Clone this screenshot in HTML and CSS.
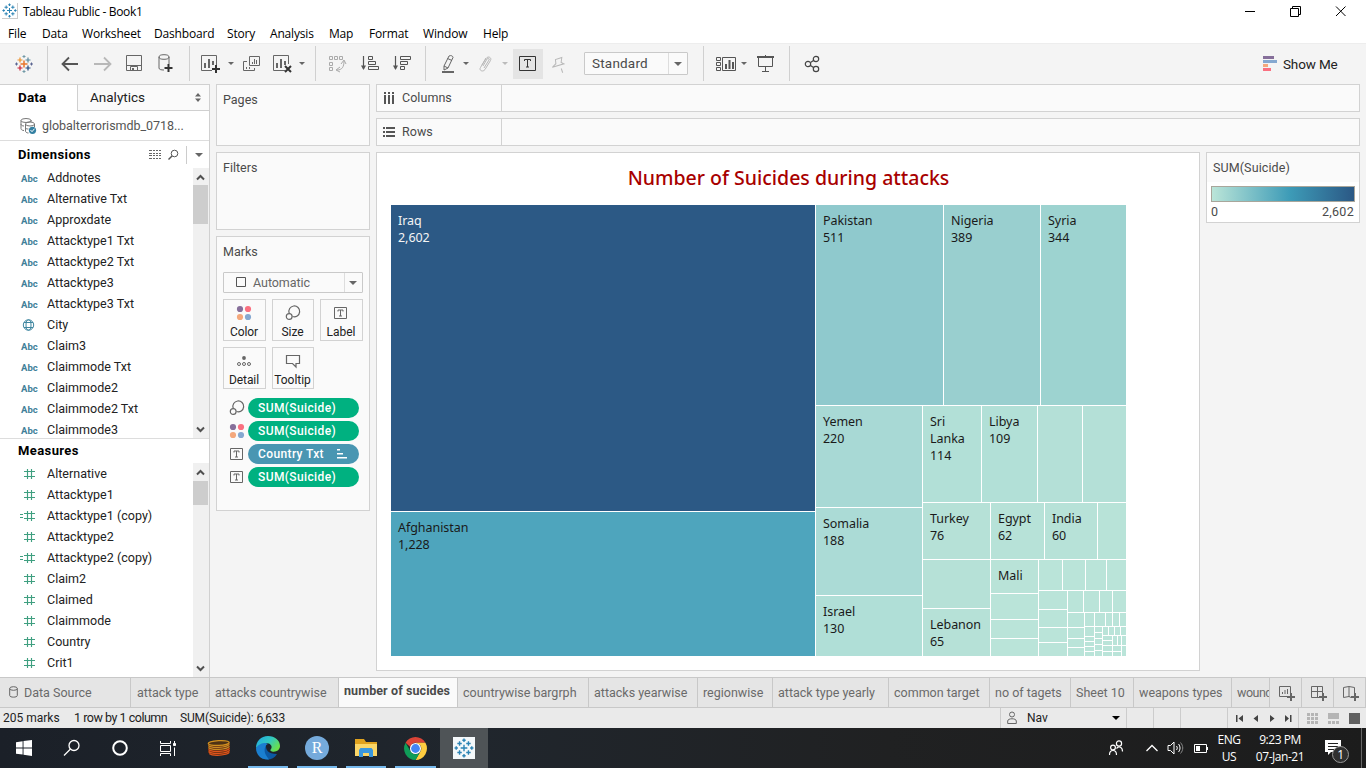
FILE: index.html
```html
<!DOCTYPE html>
<html lang="en">
<head>
<meta charset="utf-8">
<title>Tableau Public - Book1</title>
<link rel="stylesheet" href="styles.css">
</head>
<body>
<svg class="defs" width="0" height="0">
  <symbol id="tlogo" viewBox="0 0 18 18"><path d="M9 5.5v7M5.5 9h7" stroke="#e8762c" stroke-width="1.5"/><path d="M5 2.5v5M2.5 5h5" stroke="#eb912c" stroke-width="1.2"/><path d="M13 2.5v5M10.5 5h5" stroke="#59879b" stroke-width="1.2"/><path d="M5 10.500v5M2.500 13h5" stroke="#c72035" stroke-width="1.2"/><path d="M13 10.500v5M10.500 13h5" stroke="#1f457e" stroke-width="1.2"/><path d="M9 0v3M7.500 1.500h3M9 15v3M7.500 16.500h3" stroke="#7199a6"/><path d="M1.500 7.500v3M0 9h3M16.500 7.500v3M15 9h3" stroke="#5b6591"/></symbol>
  <symbol id="blogo" viewBox="0 0 18 18"><path d="M9 6v6M6 9h6M5 3v4M3 5h4M13 3v4M11 5h4M5 11v4M3 13h4M13 11v4M11 13h4M9 0.500v3M7.500 2h3M9 14.500v3M7.500 16h3M2 7.500v3M0.500 9h3M16 7.500v3M14.500 9h3" stroke="#2b83b4" stroke-width="1.250"/></symbol>
  <symbol id="size" viewBox="0 0 16 16"><g fill="none" stroke="#666" stroke-width="1.200"><path d="M4.200 8.200A5.400 5.400 0 1 1 7.600 11.500"/><circle cx="4.200" cy="11.500" r="2.900"/></g></symbol>
  <symbol id="color" viewBox="0 0 16 16"><circle cx="4" cy="4" r="3.100" fill="#866f9a"/><circle cx="12" cy="4" r="3.100" fill="#fa7080"/><circle cx="4" cy="12" r="3.100" fill="#f4a87c"/><circle cx="12" cy="12" r="3.100" fill="#85a8d0"/></symbol>
  <symbol id="label" viewBox="0 0 16 16"><g fill="none" stroke="#666"><path d="M1.500 2.500h12v11h-12z"/><path d="M5 6.500v-1.500h5v1.500M7.500 5v6M6 11h3"/></g></symbol>
  <symbol id="num" viewBox="0 0 24 12"><path d="M10.500 1v10M14.500 1v10M7 3.500h11M7 8.500h11" stroke="#3f9f80" stroke-width="1.150"/></symbol>
  <symbol id="calc" viewBox="0 0 24 12"><path d="M10.500 1v10M14.500 1v10M7 3.500h11M7 8.500h11M3 4.500h3M3 7.500h3" stroke="#3f9f80" stroke-width="1.150"/></symbol>
  <symbol id="globe" viewBox="0 0 24 12"><g fill="none" stroke="#3f86a0"><circle cx="11.500" cy="6" r="5.200"/><ellipse cx="11.500" cy="6" rx="2.500" ry="5.200"/><path d="M7 3.500h9M7 8.500h9"/></g></symbol>
</svg>

<header class="titlebar">
  <svg class="app-icon" viewBox="0 0 18 18"><use href="#blogo"/></svg>
  <span class="app-title">Tableau Public - Book1</span>
  <svg class="win-buttons" width="110" height="20" fill="none" stroke="#000"><path d="M0 10.500h10M45.500 7.500h8v8h-8zM47.500 7.500v-2h8v8h-2M91 5.500l9.500 9.500M100.500 5.500l-9.500 9.500"/></svg>
</header>
<nav class="menubar"><span>File</span><span>Data</span><span>Worksheet</span><span>Dashboard</span><span>Story</span><span>Analysis</span><span>Map</span><span>Format</span><span>Window</span><span>Help</span></nav>

<div class="toolbar">
  <svg width="18" height="18"><use href="#tlogo"/></svg>
  <i class="sep"></i>
  <svg width="18" height="16" fill="none" stroke="#555" stroke-width="1.800"><path d="M17 8H2M8 1.500L1.500 8 8 14.500"/></svg>
  <svg width="18" height="16" fill="none" stroke="#b8b8b8" stroke-width="1.800"><path d="M0 8h15M10 1.500L16.500 8 10 14.500"/></svg>
  <svg width="17" height="17" fill="none" stroke="#666"><path d="M.500.500h15v15H.500zM.500 10.500h15M4.500 15v-3.500h7V15"/><path d="M6 13h2v3H6z" fill="#666" stroke="none"/></svg>
  <svg width="18" height="19" fill="none" stroke="#666"><ellipse cx="6" cy="3" rx="5" ry="2.300"/><path d="M1 3v11c0 1.500 2 2 5 2M11 3v7"/><path d="M10.500 10v8M6.500 14h8" stroke="#333" stroke-width="2"/></svg>
  <i class="sep"></i>
  <svg width="20" height="19" fill="none" stroke="#666"><path d="M12 16.500H1.500v-15h15V11M17 2"/><path d="M5 9v5M9 5v9M13 7v4" stroke-width="2"/><path d="M16 11v8M12 15h8" stroke="#333" stroke-width="2"/></svg>
  <i class="caret"></i>
  <svg width="18" height="18" fill="none" stroke="#666"><path d="M6.500 1.500h10v9h-10zM4 6.500H.500v9h11V13M9.500 7v2M11.500 4v5M13.500 5v4M3.500 12v2M6.500 12v2"/></svg>
  <svg width="20" height="19" fill="none" stroke="#666"><path d="M12 16.500H.500v-15h15V10"/><path d="M4 9v5M8 5v9M12 7v4" stroke-width="2"/><path d="M12 12l6 6M18 12l-6 6" stroke="#333" stroke-width="2"/></svg>
  <i class="caret"></i>
  <i class="sep"></i>
  <svg width="19" height="19" fill="none" stroke="#aaa"><path d="M1.500 2.500h3v3h-3zM6.500 2.500h3v3h-3zM11.500 2.500h3v3h-3zM1.500 8.500h3v3h-3zM1.500 13.500h3v3h-3zM9 16c5 0 7-3 7-9M16 6l-3 4M16 6l2 4M8 16l4-3M8 16l4 2"/></svg>
  <svg width="19" height="17" fill="none" stroke="#555"><path d="M2.500 1v13" stroke-width="1.200"/><path d="M0 10.500h5L2.500 15z" fill="#555" stroke="none"/><path d="M7.500 1.500h4v3h-4zM7.500 6.500h7v3h-7zM7.500 11.500h10v3h-10z"/></svg>
  <svg width="19" height="17" fill="none" stroke="#555"><path d="M2.500 1v13" stroke-width="1.200"/><path d="M0 10.500h5L2.500 15z" fill="#555" stroke="none"/><path d="M7.500 1.500h10v3h-10zM7.500 6.500h7v3h-7zM7.500 11.500h4v3h-4z"/></svg>
  <i class="sep"></i>
  <svg width="16" height="20" fill="none" stroke="#666"><path d="M4 12l5-10c2-1 4 0 4 1.500L8 14l-4 2zM7.500 4.500l4.500 2M4 12l4 2"/><path d="M2 18h12" stroke-width="2"/></svg>
  <i class="caret"></i>
  <svg width="16" height="18" fill="none" stroke="#b8b8b8"><path d="M4 10l4-6.500c2-3 6-1 4.500 2L7 14.500c-2 3-6.500 1-4.500-2L8 3M6 13l5-8c1-2-1-2-2-1L5 11"/></svg>
  <i class="caret pale"></i>
  <span class="tbtn"><svg width="19" height="17" fill="none" stroke="#333"><path d="M1.500 1.500h16v14h-16z"/><path d="M6.500 6V4.500h6V6M9.500 4.500V12M8 12h3"/></svg></span>
  <svg width="16" height="18" fill="none" stroke="#b8b8b8"><path d="M5 2l6 3-1 4 3 4-11-5 3-1zM4 13l-2 4M10 2" transform="translate(16 0) scale(-1 1) rotate(-8 8 8)"/></svg>
  <span class="select"><b>Standard</b><i class="caret"></i></span>
  <i class="sep"></i>
  <svg width="21" height="16" fill="none" stroke="#555"><path d="M.500 1.500h4v3h-4zM.500 6.500h4v3h-4zM.500 11.500h4v3h-4zM6.500 1.500h13v13h-13z"/><path d="M10 8v5M13.500 4v9M17 6v7" stroke-width="2"/></svg>
  <i class="caret"></i>
  <svg width="18" height="18" fill="none" stroke="#555"><path d="M1 2h17" stroke-width="2"/><path d="M2.500 3v8.500h14V3M9.500 12v4M6 16.500h7M9.500 0v2"/></svg>
  <i class="sep"></i>
  <svg width="18" height="18" fill="none" stroke="#444" stroke-width="1.200"><circle cx="4" cy="9" r="2.700"/><circle cx="12" cy="4" r="2.700"/><circle cx="12" cy="14" r="2.700"/><path d="M6.500 7.500l3-2M6.500 10.500l3 2"/></svg>
  <span class="showme"><svg width="15" height="16"><path fill="#866f9a" d="M0 0h11v3H0z"/><path fill="#85a8d0" d="M0 4h14v3H0z"/><path fill="#f4a87c" d="M0 8h5v3H0z"/><path fill="#fa7080" d="M0 12h8v3H0z"/></svg>Show Me</span>
</div>

<main class="workspace">
  <aside class="sidebar">
    <div class="side-tabs"><b>Data</b><span>Analytics<svg width="7" height="9" fill="#666"><path d="M0 3.500h6L3 0zM0 5.500h6L3 9z"/></svg></span></div>
    <div class="source"><svg width="18" height="18" fill="none" stroke="#777"><ellipse cx="6" cy="3.500" rx="5" ry="2"/><path d="M1 3.500v8c0 1 1 2 3 2M1 7c0 1 1 2 3 2M11 3v2"/><ellipse cx="10" cy="7" rx="4.500" ry="2"/><path d="M5.500 7v7c0 1 1 2 3 2M14.500 7v3M5.500 10.500c0 1 1 1.500 3 1.500"/><circle cx="12.500" cy="13.300" r="3.600" fill="#3480a2" stroke="none"/><path d="M10.500 13l1.500 1.700 2.500-3" stroke="#fff"/></svg><span>globalterrorismdb_0718...</span></div>
    <div class="side-head dim-head"><b>Dimensions</b><svg width="13" height="10" stroke="#666"><path d="M0 .500h12M0 3.500h12M0 5.500h12M0 8.500h12" stroke-dasharray="3 1 2 1 2 1 2 1"/></svg><svg width="12" height="12" fill="none" stroke="#555"><circle cx="6.500" cy="4.500" r="3.300"/><path d="M4 7L.500 10.500" stroke-width="1.500"/></svg><i class="vline"></i><i class="caret big"></i></div>
    <div class="fieldbox dims"><ul id="dims"></ul><div class="scroll"><svg width="9" height="7"><path d="M1 5.500l3.500-3.500L8 5.500"/></svg><i></i><svg width="9" height="7"><path d="M1 1.500L4.500 5 8 1.500"/></svg></div></div>
    <div class="side-head meas-head"><b>Measures</b></div>
    <div class="fieldbox meas"><ul id="meas"></ul><div class="scroll"><svg width="9" height="7"><path d="M1 5.500l3.500-3.500L8 5.500"/></svg><i></i><svg width="9" height="7"><path d="M1 1.500L4.500 5 8 1.500"/></svg></div></div>
  </aside>

  <section class="cards">
    <div class="card pages">Pages</div>
    <div class="card filters">Filters</div>
    <div class="card marks">
      <h3>Marks</h3>
      <div class="marktype"><svg width="11" height="11" fill="none" stroke="#555"><path d="M.500.500h9v9h-9z"/></svg><span>Automatic</span><i class="caret"></i></div>
      <div class="mark-grid">
        <div><svg width="16" height="16"><use href="#color"/></svg>Color</div>
        <div><svg width="16" height="16"><use href="#size"/></svg>Size</div>
        <div><svg width="16" height="16"><use href="#label"/></svg>Label</div>
        <div><svg width="16" height="16" fill="none" stroke="#666"><circle cx="8" cy="5" r="1.900" fill="#666" stroke="none"/><circle cx="3" cy="11" r="1.500"/><circle cx="8" cy="11" r="1.500"/><circle cx="13" cy="11" r="1.500"/></svg>Detail</div>
        <div><svg width="16" height="16" fill="none" stroke="#666" stroke-width="1.200"><path d="M1.500 2.500h13v8h-3.500v3.500L7.500 10.500h-6z"/></svg>Tooltip</div>
      </div>
      <div class="pills">
        <div><svg width="16" height="16"><use href="#size"/></svg><span>SUM(Suicide)</span></div>
        <div><svg width="16" height="16"><use href="#color"/></svg><span>SUM(Suicide)</span></div>
        <div><svg width="16" height="16"><use href="#label"/></svg><span class="blue">Country Txt<svg width="11" height="10" fill="#fff"><path d="M0 0h3v1.500H0zM0 4h6v1.500H0zM0 8h10v1.500H0z"/></svg></span></div>
        <div><svg width="16" height="16"><use href="#label"/></svg><span>SUM(Suicide)</span></div>
      </div>
    </div>
  </section>

  <section class="stage">
    <div class="shelf"><span><svg width="13" height="13" fill="#555"><path d="M1 0h2v2H1zM5 0h2v2H5zM9 0h2v2H9zM1 3h2v9H1zM5 3h2v9H5zM9 3h2v9H9z"/></svg>Columns</span></div>
    <div class="shelf"><span><svg width="13" height="13" fill="#555"><path d="M0 1h2v2H0zM0 5h2v2H0zM0 9h2v2H0zM3 1h9v2H3zM3 5h9v2H3zM3 9h9v2H3z"/></svg>Rows</span></div>
    <div class="viewrow">
      <div class="view"><h1>Number of Suicides during attacks</h1><div id="treemap" class="treemap"></div></div>
      <div class="legend"><h3>SUM(Suicide)</h3><div class="ramp"></div><div class="range"><span>0</span><span>2,602</span></div></div>
    </div>
  </section>
</main>

<div class="sheets">
  <span class="ds"><svg width="10" height="13" fill="none" stroke="#666"><ellipse cx="4.500" cy="2.500" rx="3.800" ry="1.800"/><path d="M.700 2.500v7c0 2.200 7.600 2.200 7.600 0v-7"/></svg>Data Source</span><span>attack type</span><span>attacks countrywise</span><span class="active">number of sucides</span><span>countrywise bargrph</span><span>attacks yearwise</span><span>regionwise</span><span>attack type yearly</span><span>common target</span><span>no of tagets</span><span>Sheet 10</span><span>weapons types</span><span class="cut">wound</span>
  <span class="new"><svg width="17" height="16" fill="none" stroke="#666"><path d="M9 11.500H.500v-10h11V8M3.500 7v2M6 5v4M8.500 4v5"/><path d="M12 8v8M8 12h8" stroke-width="2"/></svg></span>
  <span class="new"><svg width="17" height="16" fill="none" stroke="#666"><path d="M9 12.500H.500v-11h11V8M6.500 1v11M.500 6.500h11"/><path d="M12 8v8M8 12h8" stroke-width="2"/></svg></span>
  <span class="new"><svg width="17" height="16" fill="none" stroke="#666"><path d="M8 12.500L6 11.500l-5.500 1v-10L6 1.500l5.500 1V8M6 2v10"/><path d="M12 8v8M8 12h8" stroke-width="2"/></svg></span>
</div>
<div class="status">
  <span>205 marks</span><span>1 row by 1 column</span><span class="sum">SUM(Suicide): 6,633</span>
  <span class="user"><svg width="11" height="14" fill="none" stroke="#666"><circle cx="5" cy="3.500" r="2.500"/><path d="M.700 12.500V10c0-3 8.600-3 8.600 0v2.500z"/></svg>Nav<i class="caret black"></i></span>
  <i class="cell"></i><i class="cell"></i><i class="cell wide"></i>
  <span class="pager"><svg width="58" height="9" fill="#444"><path d="M0 1h1.500v7H0zM7 1v7L2.500 4.500zM22 1v7l-4.500-3.500zM34 1v7l4.500-3.500zM49 1v7l4-3.500zM54 1h1.500v7H54z"/></svg></span>
  <span class="viewmodes"><svg width="56" height="12" fill="#b5b5b5"><path d="M0 1h3v3H0zM4 1h3v3H4zM8 1h3v3H8zM0 5h3v3H0zM4 5h3v3H4zM8 5h3v3H8zM0 9h3v3H0zM4 9h3v3H4zM8 9h3v3H8zM21 1h11v6H21zM21 9h3v3h-3zM25 9h3v3h-3zM29 9h3v3h-3z"/><path fill="#606060" d="M42 1h11v11H42z"/></svg></span>
</div>

<footer class="taskbar">
  <span><svg width="16" height="16" fill="#fff"><path d="M0 2.200l6.600-.900v6.200H0zM7.500 1.100L16 0v7.500H7.500zM0 8.400h6.600v6.200L0 13.700zM7.500 8.400H16V16l-8.500-1.200z"/></svg></span>
  <span><svg width="18" height="18" fill="none" stroke="#fff" stroke-width="1.300"><circle cx="11" cy="6.500" r="5"/><path d="M7.500 10L1 16.500"/></svg></span>
  <span><svg width="16" height="16" fill="none" stroke="#fff" stroke-width="2"><circle cx="8" cy="8" r="6.800"/></svg></span>
  <span><svg width="17" height="17" fill="none" stroke="#fff"><path d="M.500 1v2.500h10V1M.500 5.500h10v6H.500zM.500 16v-2.500h10V16M14.500 1v2M14.500 7.500v8.500"/><path fill="#fff" d="M13.500 3.500h2v2h-2z"/></svg></span>
  <span class="coil"><svg width="24" height="18" fill="none" stroke-width="1.200"><path d="M1 4v9.500c3 4 19 4 22 0V4z" fill="#5e2c12"/><g transform="rotate(-3 12 9)"><ellipse cx="12" cy="4" rx="10.500" ry="2.400" stroke="#d09020" fill="#4d3215"/><path d="M1.500 6c3 3.200 18 3.200 21 0M1.500 8c3 3.200 18 3.200 21 0" stroke="#c98a24"/><path d="M1.500 10c3 3.200 18 3.200 21 0M1.500 12c3 3.200 18 3.200 21 0M2 14c3 3 17 3 20 0" stroke="#e0551c"/></g></svg></span>
  <span class="run"><svg width="24" height="24"><defs><linearGradient id="eg" x1="0" y1="0" x2="1" y2=".6"><stop offset="0" stop-color="#1fa7e8"/><stop offset=".55" stop-color="#32c8c0"/><stop offset="1" stop-color="#6ae04a"/></linearGradient></defs><path fill="#0c59a4" d="M1 11c3-5 9-4 9-1 0 4 2 8 11 8-4 7-14 7.500-18 1-1.500-2.500-2-5-2-8z"/><path fill="#1b7fd0" d="M0 12C2 7 8 5.500 12 8c-3 1-4 5-3 9 1 3 3 5 4 6.500C5 24 0 19 0 12z"/><path fill="url(#eg)" d="M0 12C0 5 5 0 12 0c7 0 12 4.500 12 10 0 4-4 6.500-8 5.500-2-.500-2-1.500-1-2.500 2-3-1-6-5-6-5 0-8 2-10 5z"/></svg></span>
  <span class="run"><b class="rbadge">R</b></span>
  <span class="run"><svg width="22" height="20"><path fill="#e0a21e" d="M0 1h9l2 3h11v4H0z"/><path fill="#fbd667" d="M0 6h22v12H0z"/><path fill="#3a97dd" d="M4 19v-7l1.500-2h11l1.500 2v7h-4v-4H8v4z"/></svg></span>
  <span class="run"><svg width="23" height="23" viewBox="0 0 22 22"><path fill="#db4437" d="M1.500 5.500A11 11 0 0 1 20.500 5.500H11A5.500 5.500 0 0 0 6 9.500z"/><path fill="#ffcd40" d="M20.500 5.500A11 11 0 0 1 11 22L15.800 13.700a5.500 5.500 0 0 0-.600-6.200L11 5.500z"/><path fill="#0f9d58" d="M1.500 5.500A11 11 0 0 0 11 22l4.800-8.300A5.500 5.500 0 0 1 6.200 13.700z"/><circle cx="11" cy="11" r="5.300" fill="#fff"/><circle cx="11" cy="11" r="4.200" fill="#4285f4"/></svg></span>
  <span class="current"><i><svg width="20" height="20"><use href="#blogo"/></svg></i></span>
  <div class="tray">
    <svg width="16" height="16" fill="none" stroke="#fff" stroke-width="1.200"><circle cx="11" cy="3.500" r="2.600"/><circle cx="5" cy="7.500" r="2.400"/><path d="M1.500 15c0-6 7-6 7 0M8.500 8.500c2.500-3 6-1.500 6 3"/></svg>
    <svg width="14" height="16" fill="none" stroke="#fff" stroke-width="1.300"><path d="M1.500 11L7 5.500l5.500 5.500"/></svg>
    <svg width="18" height="16" fill="none" stroke="#fff"><path d="M1 5.500h2.500L7 2v12L3.500 10.500H1zM9.500 6c1 1.500 1 2.500 0 4M11.500 4c2 2.500 2 5.500 0 8"/><path d="M13.500 2.500c3 3.500 3 7.500 0 11" stroke="#888"/></svg>
    <svg width="16" height="16" fill="none" stroke="#fff"><path d="M1.500 4.500h12v8h-12zM14.500 7v3"/><path fill="#fff" stroke="none" d="M3 6h4v5H3z"/></svg>
    <span>ENG<br>US</span><span>9:23 PM<br>07-Jan-21</span>
    <span class="note"><svg width="18" height="18" fill="#fff"><path d="M0 1h16v12H6l-3 3v-3H0z"/><path d="M3 4.500h10M3 7.500h10M3 10.500h6" stroke="#222"/></svg><em>1</em></span>
    <i class="peek"></i>
  </div>
</footer>
<script src="app.js"></script>
</body>
</html>
```

FILE: styles.css
```css
* { box-sizing: border-box; }
body { margin: 0; width: 1366px; height: 768px; overflow: hidden; display: flex; flex-direction: column; background: #f4f4f4; font: 12.5px/16px Roboto, "Noto Sans", sans-serif; color: #4a4a4a; }
svg { display: block; flex: none; }
.defs { position: absolute; }
i, em { font-style: normal; }
h1, h3, ul { margin: 0; padding: 0; font-weight: 400; }

.titlebar { height: 22px; flex: none; background: #fff; display: flex; align-items: center; font: 12px "Open Sans", sans-serif; color: #000; letter-spacing: -.33px; }
.app-icon { width: 16px; height: 16px; margin: 0 5px 0 2px; border-right: 1px solid #ccc; border-bottom: 1px solid #ccc; }
.win-buttons { margin-left: auto; margin-right: 11px; }
.menubar { height: 21px; flex: none; background: #fff; padding: 2px 0 0 8px; display: grid; grid-template-columns: 34px 40px 72px 73px 43px 59px 40px 54px 60px auto; align-items: center; font: 12px "Open Sans", sans-serif; color: #000; letter-spacing: -.17px; }

.toolbar { height: 41px; flex: none; border-top: 1px solid #ededed; padding: 0 0 1px 15px; display: grid; grid-template-columns: 32px 14px 33px 32px 32px 31px 11px 28px 15px 30px 26px 16px 13px 33px 32px 32px 15px 23px 15px 24px 11px 37px 34px 119px 13px 25px 15px 33px 15px 459px auto; align-items: center; }
.sep { width: 1px; height: 35px; background: #d0d0d0; }
.caret { width: 0; height: 0; border: 3px solid transparent; border-top-color: #666; border-bottom: 0; }
.pale { border-top-color: #bbb; }
.big { border-width: 4px 4px 0; }
.black { border-width: 4px 4px 0; border-top-color: #000; }
.tbtn { width: 30px; height: 30px; background: #e4e4e4; display: grid; place-items: center; padding-right: 1px; }
.select { width: 104px; height: 23px; background: #fafafa; border: 1px solid #c9c9c9; display: flex; align-items: center; padding-left: 7px; border-radius: 1px; }
.select b { font-weight: 400; font-size: 13.5px; letter-spacing: .2px; flex: 1; border-right: 1px solid #ddd; line-height: 21px; }
.select .caret { border-width: 4px 4px 0; margin: 0 5px; }
.showme { display: flex; align-items: center; gap: 5px; font-size: 13.5px; color: #222; letter-spacing: -.15px; }

.workspace { height: 593px; flex: none; display: flex; }
.sidebar { width: 210px; background: #fff; border-right: 1px solid #d0d0d0; border-top: 1px solid #d0d0d0; color: #222; }
.side-tabs { display: flex; height: 26px; font-size: 13.5px; line-height: 25px; }
.side-tabs b { width: 77px; padding-left: 18px; color: #000; font-weight: 700; letter-spacing: .15px; }
.side-tabs span { flex: 1; background: #fafafa; border: solid #d0d0d0; border-width: 0 0 1px 1px; padding: 0 7px 0 12px; display: flex; justify-content: space-between; align-items: center; letter-spacing: 0; }
.source { height: 30px; display: flex; align-items: center; gap: 4px; padding-left: 20px; border-bottom: 1px solid #ddd; color: #555; letter-spacing: -.03px; }
.side-head { display: flex; align-items: center; padding: 1px 0 0 18px; color: #000; font-size: 13px; }
.dim-head { height: 26px; }
.side-head b { width: 131px; letter-spacing: .4px; }
.dim-head svg + svg { margin-left: 6px; }
.vline { width: 1px; height: 18px; background: #ccc; margin: 0 8px 0 6px; }
.meas-head { height: 24px; border-top: 1px solid #ddd; padding-top: 0; }
.fieldbox { display: flex; overflow: hidden; }
.fieldbox ul { flex: 1; list-style: none; }
.fieldbox li { height: 21px; display: flex; align-items: center; gap: 6px; padding-left: 17px; white-space: nowrap; letter-spacing: .02px; }
.abc { width: 24px; padding: 2px 0 0 4px; font: 700 9.5px Roboto, sans-serif; color: #3f7f99; }
.dims { height: 271px; }
.meas { height: 215px; }
.meas ul { margin-top: 1px; }
.scroll { width: 16px; background: #f0f0f0; display: flex; flex-direction: column; align-items: center; padding: 6px 1px 5px 0; margin-top: 1px; }
.scroll svg { fill: none; stroke: #505050; stroke-width: 2; }
.scroll i { width: 15px; background: #cdcdcd; margin: 4px 0 auto; height: 39px; }
.meas .scroll i { height: 24px; margin-top: 5px; }

.cards { width: 154px; margin-left: 6px; display: flex; flex-direction: column; gap: 6px; }
.card { background: #fafafa; border: 1px solid #d2d2d2; padding: 7px 6px; }
.pages { height: 62px; }
.filters { height: 78px; }
.marks { height: 275px; }
.marks h3, .legend h3 { font-size: 12.5px; }
.marktype { margin-top: 12px; height: 21px; border: 1px solid #c9c9c9; border-radius: 1px; display: flex; align-items: center; padding: 0 5px 0 12px; }
.marktype .caret { border-width: 4px 4px 0; }
.marktype span { flex: 1; margin-left: 6px; border-right: 1px solid #ddd; margin-right: 4px; line-height: 19px; color: #666; letter-spacing: -.05px; }
.mark-grid { margin-top: 6px; display: grid; grid-template-columns: 43px 42px 43px; gap: 6px; }
.mark-grid div { height: 42px; border: 1px solid #d2d2d2; display: flex; flex-direction: column; align-items: center; justify-content: space-between; padding: 5px 1px 0 0; font-size: 12px; color: #222; letter-spacing: -.05px; }
.pills { margin: 9px 3px 0 6px; display: flex; flex-direction: column; gap: 3px; }
.pills div { display: flex; align-items: center; gap: 3px; }
.pills span { width: 111px; height: 20px; border-radius: 10px; background: #00b180; color: #fff; padding: 0 11px 0 10px; display: flex; align-items: center; justify-content: space-between; font-size: 12px; font-weight: 500; letter-spacing: .38px; }
.pills .blue { background: #4996b2; }

.stage { width: 984px; margin-left: 6px; display: flex; flex-direction: column; gap: 6px; }
.shelf { height: 28px; flex: none; background: #fafafa; border: 1px solid #d2d2d2; }
.shelf span { width: 125px; height: 26px; border-right: 1px solid #d2d2d2; padding-left: 6px; display: flex; align-items: center; gap: 6px; letter-spacing: .05px; }
.viewrow { display: flex; gap: 6px; align-items: flex-start; }
.view { width: 824px; height: 519px; background: #fff; border: 1px solid #d2d2d2; padding: 8px 0 0 14px; }
.view h1 { height: 44px; padding-right: 13px; text-align: center; font: 500 19.5px/33px "Noto Sans", sans-serif; color: #a80000; }
.treemap { width: 735px; height: 451px; display: flex; }
.group { display: flex; gap: 1px; flex: 1; min-width: 0; min-height: 0; }
.stack { flex-direction: column; }
.tile { flex: 1; min-width: 0; min-height: 0; overflow: hidden; }
.tile p { margin: 7px; font: 12.5px/17px "Noto Sans", sans-serif; color: #1a1a1a; letter-spacing: -.05px; }
.tile.dark p { color: #f4f4f4; }
.legend { width: 154px; height: 71px; background: #fff; border: 1px solid #d2d2d2; }
.legend h3 { background: #fafafa; height: 29px; padding: 7px 6px; letter-spacing: .1px; }
.ramp { height: 16px; margin: 4px 4px 2px; border: 1px solid #a9a69b; background: linear-gradient(90deg, #bbe5d8, #3d9bb7 55%, #2b5885); }
.range { display: flex; justify-content: space-between; padding: 0 5px 0 4px; letter-spacing: .3px; }

.sheets { height: 31px; flex: none; display: grid; grid-template-columns: 131px 79px 129px 119px 131px 109px 75px 116px 101px 81px 63px 98px 38px 32px 32px 32px; background: #e5e5e5; border: solid #c8c8c8; border-width: 1px 0; color: #6a6a6a; line-height: 29px; }
.sheets span { border-right: 1px solid #c8c8c8; padding-left: 5px; overflow: hidden; white-space: nowrap; }
.sheets .ds { display: flex; align-items: center; gap: 5px; padding-left: 9px; }
.sheets .active { background: #fafafa; font-weight: 700; color: #4a4a4a; line-height: 26px; letter-spacing: .1px; }
.sheets span:nth-child(2) { padding-left: 6px; }
.sheets .cut { letter-spacing: -.5px; }
.sheets .new { display: flex; align-items: center; padding-left: 9px; }
.status { height: 20px; flex: none; background: #eaeaea; display: flex; align-items: center; padding-left: 3px; color: #222; font-size: 12px; }
.status > span:first-child { width: 71px; }
.status > span:nth-child(2) { width: 106px; letter-spacing: -.5px; white-space: nowrap; letter-spacing: -.48px; font-size: 12.5px; }
.status > .sum { letter-spacing: -.15px; }
.status .user { margin-left: auto; height: 20px; width: 127px; border: solid #ccc; border-width: 0 1px; display: flex; align-items: center; gap: 9px; padding: 0 6px; }
.user .caret { margin-left: auto; }
.cell { width: 27px; height: 20px; border-right: 1px solid #ccc; }
.cell.wide { width: 47px; }
.pager { width: 71px; height: 20px; border-right: 1px solid #ccc; display: grid; align-items: center; padding-left: 8px; }
.viewmodes { width: 67px; padding-left: 8px; }

.taskbar { height: 40px; flex: none; background: linear-gradient(90deg, #1b2028, #20262d 35%, #202122 65%, #1c1c1c); display: grid; grid-template-columns: 48px 48px 48px 48px 51px 49px 49px 49px 50px 48px 1fr; }
.taskbar > span { display: grid; place-items: center; }
.run { box-shadow: inset 0 -2px #76b9ed; margin: 0 4px 0 5px; }
.coil { padding-left: 3px; }
.rbadge { width: 24px; height: 24px; border-radius: 50%; background: #75aadb; color: #fff; font: 16px/24px "Liberation Serif", serif; text-align: center; }
.current { background: #4f5457; }
.current i { width: 22px; height: 22px; background: #f4f8fa; display: grid; place-items: center; }
.tray { display: grid; grid-template-columns: 37px 22px 26px 17px 38px 64px 49px 1px; justify-content: end; align-items: center; padding-right: 4px; color: #fff; font: 12px/17px "Open Sans", sans-serif; text-align: center; letter-spacing: -.45px; }
.note { position: relative; padding-left: 13px; }
.note em { position: absolute; left: 20px; top: 7px; width: 17px; height: 17px; border: 1px solid #999; border-radius: 50%; background: #303030; line-height: 15px; }
.peek { height: 40px; width: 1px; background: #666; }
```

FILE: app.js
```js
// Field names; the icon follows from the kind of field.
const fields = {
  dims: ['Addnotes', 'Alternative Txt', 'Approxdate', 'Attacktype1 Txt', 'Attacktype2 Txt', 'Attacktype3', 'Attacktype3 Txt', 'City', 'Claim3', 'Claimmode Txt', 'Claimmode2', 'Claimmode2 Txt', 'Claimmode3']
    .map(n => [n === 'City' ? 'globe' : 'abc', n]),
  meas: ['Alternative', 'Attacktype1', 'Attacktype1 (copy)', 'Attacktype2', 'Attacktype2 (copy)', 'Claim2', 'Claimed', 'Claimmode', 'Country', 'Crit1']
    .map(n => [n.includes('copy') ? 'calc' : 'num', n])
};
const iconFor = icon => icon === 'abc'
  ? '<span class="abc">Abc</span>'
  : `<svg width="24" height="12"><use href="#${icon}"/></svg>`;
for (const id in fields) {
  document.getElementById(id).innerHTML = fields[id]
    .map(([icon, name]) => `<li>${iconFor(icon)}${name}</li>`).join('');
}

// Treemap: every child carries its extent along the parent's direction; the last one fills.
const leaf = (color, ...lines) => ({ color, lines });
const group = (dir, sizes, ...kids) => ({ dir, sizes, kids });
const row = (sizes, ...kids) => group('row', sizes, ...kids);
const col = (sizes, ...kids) => group('stack', sizes, ...kids);
const pale = '#bae4d9';

const tree = row([424],
  col([306], leaf('#2c5985', 'Iraq', '2,602'), leaf('#4ea5bd', 'Afghanistan', '1,228')),
  col([200],
    row([127, 96], leaf('#8fc9cd', 'Pakistan', '511'), leaf('#99cfcf', 'Nigeria', '389'), leaf('#9dd3d0', 'Syria', '344')),
    row([106],
      col([101, 87], leaf('#a8d9d5', 'Yemen', '220'), leaf('#abdbd6', 'Somalia', '188'), leaf('#b0dfd7', 'Israel', '130')),
      col([96, 56],
        row([58, 55, 44], leaf('#b2e0d7', 'Sri Lanka', '114'), leaf('#b2e0d7', 'Libya', '109'), leaf('#b4e0d7'), leaf('#b4e0d7')),
        row([67, 53, 52], leaf('#b6e1d7', 'Turkey', '76'), leaf('#b7e2d8', 'Egypt', '62'), leaf('#b7e2d8', 'India', '60'), leaf('#b8e3d8')),
        row([67, 47],
          col([48], leaf('#b6e1d7'), leaf('#b6e1d7', 'Lebanon', '65')),
          col([33, 25, 18], leaf('#b9e3d8', 'Mali')),
          col([30],
            row([23, 22, 20]),
            row([28],
              col([18, 17, 14]),
              col([21],
                row([15, 15, 12]),
                row([16],
                  col([14, 10, 8]),
                  col([13],
                    row([9, 10, 6, 6]),
                    row([9, 7],
                      col([9, 4, 4, 4]),
                      col([5, 5, 5, 5]),
                      col([8],
                        row([5, 5, 5]),
                        row([9],
                          col([4, 4, 5]),
                          col([9], row([4, 3]), row([8], col([5]), leaf(pale))))))))))))))));

function build(node) {
  const el = document.createElement('div');
  if (!node.kids) {
    el.className = node.color === '#2c5985' ? 'tile dark' : 'tile';
    el.style.background = node.color;
    if (node.lines.length) {
      const p = document.createElement('p');
      p.innerHTML = node.lines.join('<br>');
      el.append(p);
    }
    return el;
  }
  el.className = 'group ' + node.dir;
  for (let i = 0; i <= node.sizes.length; i++) {
    const child = build(node.kids[i] || leaf(pale));
    if (i < node.sizes.length) child.style.flex = `0 0 ${node.sizes[i]}px`;
    el.append(child);
  }
  return el;
}
document.getElementById('treemap').append(build(tree));
```
